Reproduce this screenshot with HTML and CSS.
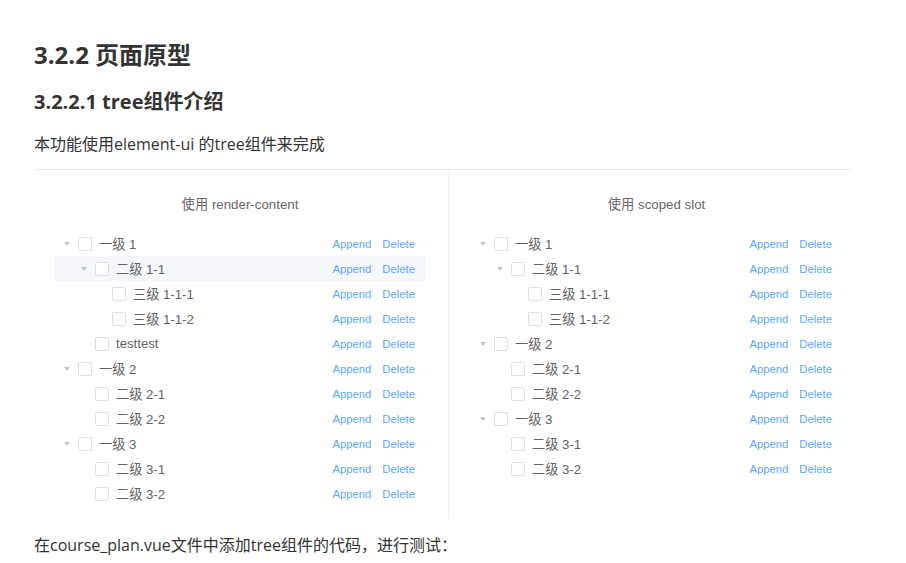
FILE: index.html
```html
<!DOCTYPE html>
<html lang="zh">
<head>
<meta charset="utf-8">
<title>3.2.2 页面原型</title>
<link rel="stylesheet" href="styles.css">
</head>
<body>
<div class="page">
  <h1 class="h1">3.2.2 页面原型</h1>
  <h2 class="h2">3.2.2.1 tree组件介绍</h2>
  <p class="para">本功能使用element-ui 的tree组件来完成</p>

  <div class="demo">
    <div class="block block-left">
      <p class="block-title">使用 render-content</p>
      <div class="tree">
        <div class="node"><span class="caret"></span><span class="cb"></span><div class="custom"><span class="label">一级 1</span><span class="ops"><span class="op">Append</span><span class="op">Delete</span></span></div></div>
        <div class="node lv2 current"><span class="caret"></span><span class="cb"></span><div class="custom"><span class="label">二级 1-1</span><span class="ops"><span class="op">Append</span><span class="op">Delete</span></span></div></div>
        <div class="node lv3"><span class="caret leaf"></span><span class="cb"></span><div class="custom"><span class="label">三级 1-1-1</span><span class="ops"><span class="op">Append</span><span class="op">Delete</span></span></div></div>
        <div class="node lv3"><span class="caret leaf"></span><span class="cb"></span><div class="custom"><span class="label">三级 1-1-2</span><span class="ops"><span class="op">Append</span><span class="op">Delete</span></span></div></div>
        <div class="node lv2"><span class="caret leaf"></span><span class="cb"></span><div class="custom"><span class="label">testtest</span><span class="ops"><span class="op">Append</span><span class="op">Delete</span></span></div></div>
        <div class="node"><span class="caret"></span><span class="cb"></span><div class="custom"><span class="label">一级 2</span><span class="ops"><span class="op">Append</span><span class="op">Delete</span></span></div></div>
        <div class="node lv2"><span class="caret leaf"></span><span class="cb"></span><div class="custom"><span class="label">二级 2-1</span><span class="ops"><span class="op">Append</span><span class="op">Delete</span></span></div></div>
        <div class="node lv2"><span class="caret leaf"></span><span class="cb"></span><div class="custom"><span class="label">二级 2-2</span><span class="ops"><span class="op">Append</span><span class="op">Delete</span></span></div></div>
        <div class="node"><span class="caret"></span><span class="cb"></span><div class="custom"><span class="label">一级 3</span><span class="ops"><span class="op">Append</span><span class="op">Delete</span></span></div></div>
        <div class="node lv2"><span class="caret leaf"></span><span class="cb"></span><div class="custom"><span class="label">二级 3-1</span><span class="ops"><span class="op">Append</span><span class="op">Delete</span></span></div></div>
        <div class="node lv2"><span class="caret leaf"></span><span class="cb"></span><div class="custom"><span class="label">二级 3-2</span><span class="ops"><span class="op">Append</span><span class="op">Delete</span></span></div></div>
      </div>
    </div>
    <div class="block block-right">
      <p class="block-title">使用 scoped slot</p>
      <div class="tree">
        <div class="node"><span class="caret"></span><span class="cb"></span><div class="custom"><span class="label">一级 1</span><span class="ops"><span class="op">Append</span><span class="op">Delete</span></span></div></div>
        <div class="node lv2"><span class="caret"></span><span class="cb"></span><div class="custom"><span class="label">二级 1-1</span><span class="ops"><span class="op">Append</span><span class="op">Delete</span></span></div></div>
        <div class="node lv3"><span class="caret leaf"></span><span class="cb"></span><div class="custom"><span class="label">三级 1-1-1</span><span class="ops"><span class="op">Append</span><span class="op">Delete</span></span></div></div>
        <div class="node lv3"><span class="caret leaf"></span><span class="cb"></span><div class="custom"><span class="label">三级 1-1-2</span><span class="ops"><span class="op">Append</span><span class="op">Delete</span></span></div></div>
        <div class="node"><span class="caret"></span><span class="cb"></span><div class="custom"><span class="label">一级 2</span><span class="ops"><span class="op">Append</span><span class="op">Delete</span></span></div></div>
        <div class="node lv2"><span class="caret leaf"></span><span class="cb"></span><div class="custom"><span class="label">二级 2-1</span><span class="ops"><span class="op">Append</span><span class="op">Delete</span></span></div></div>
        <div class="node lv2"><span class="caret leaf"></span><span class="cb"></span><div class="custom"><span class="label">二级 2-2</span><span class="ops"><span class="op">Append</span><span class="op">Delete</span></span></div></div>
        <div class="node"><span class="caret"></span><span class="cb"></span><div class="custom"><span class="label">一级 3</span><span class="ops"><span class="op">Append</span><span class="op">Delete</span></span></div></div>
        <div class="node lv2"><span class="caret leaf"></span><span class="cb"></span><div class="custom"><span class="label">二级 3-1</span><span class="ops"><span class="op">Append</span><span class="op">Delete</span></span></div></div>
        <div class="node lv2"><span class="caret leaf"></span><span class="cb"></span><div class="custom"><span class="label">二级 3-2</span><span class="ops"><span class="op">Append</span><span class="op">Delete</span></span></div></div>
      </div>
    </div>
  </div>

  <p class="para para-last">在course_plan.vue文件中添加tree组件的代码，进行测试：</p>
</div>
</body>
</html>
```

FILE: styles.css
```css
html, body {
  margin: 0;
  padding: 0;
  background: #ffffff;
}

.page {
  padding: 40px 0 0 34px;
  width: 817px;
  font-family: "Open Sans", "Noto Sans CJK SC", sans-serif;
  color: #333333;
}

.h1 {
  margin: 0;
  font-size: 24px;
  line-height: 30px;
  font-weight: 700;
  color: #333333;
}

.h2 {
  margin: 20px 0 0 0;
  font-size: 20px;
  line-height: 24px;
  font-weight: 700;
  color: #333333;
}

.para {
  margin: 18px 0 0 0;
  font-size: 16px;
  line-height: 24px;
}

.para-last {
  margin-top: 15px;
}

.demo {
  margin-top: 13px;
  margin-left: 1px;
  width: 816px;
  border-top: 1px solid #e8e8e8;
  display: flex;
  font-family: "Liberation Sans", "Noto Sans CJK SC", sans-serif;
}

.block {
  box-sizing: border-box;
  padding-top: 8px;
  padding-bottom: 12px;
}

.block-left {
  width: 414px;
  padding-left: 20px;
  padding-right: 23px;
  border-right: 1px solid #eff2f6;
}

.block-right {
  flex: 1;
  padding-left: 22px;
  padding-right: 9px;
}

.block-title {
  margin: 0;
  height: 53px;
  line-height: 53px;
  text-align: center;
  font-size: 13.3px;
  color: #666666;
}

.tree {
  display: flex;
  flex-direction: column;
}

.node {
  display: flex;
  align-items: center;
  height: 25px;
  font-size: 13.2px;
  color: #606266;
}

.node.lv2 {
  padding-left: 17px;
}

.node.lv3 {
  padding-left: 34px;
}

.node.current {
  background: #f5f7fa;
}

.caret {
  width: 23px;
  height: 25px;
  display: flex;
  align-items: center;
  justify-content: center;
  flex-shrink: 0;
}

.caret::before {
  content: "";
  width: 0;
  height: 0;
  border-left: 3.5px solid transparent;
  border-right: 3.5px solid transparent;
  border-top: 4.5px solid #c0c4cc;
}

.caret.leaf::before {
  border-top-color: transparent;
}

.cb {
  box-sizing: border-box;
  width: 14px;
  height: 14px;
  border: 1px solid #dcdfe6;
  border-radius: 2px;
  background: #ffffff;
  margin-right: 7px;
  flex-shrink: 0;
}

.custom {
  flex: 1;
  display: flex;
  align-items: center;
  justify-content: space-between;
  padding-right: 10px;
}

.label {
  white-space: nowrap;
}

.ops {
  display: flex;
  gap: 11px;
}

.op {
  font-size: 11.3px;
  color: #5aa8ff;
}
```
